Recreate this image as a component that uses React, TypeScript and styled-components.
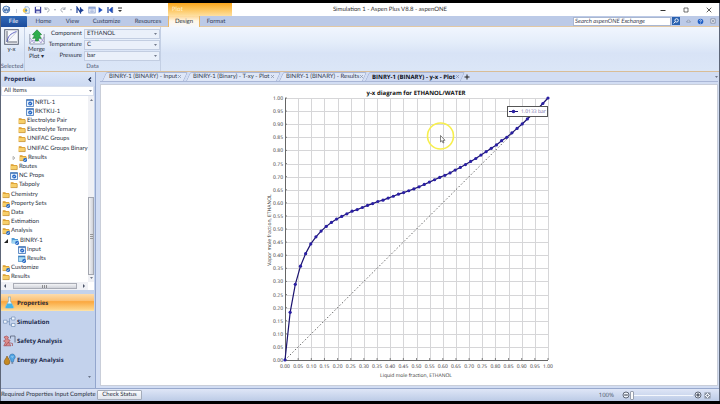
import React, { useState } from "react";
import styled, { createGlobalStyle, css } from "styled-components";

const GlobalStyle = createGlobalStyle`
  * { box-sizing: border-box; }
  body { margin: 0; background: #000; }
  body, button, input, select {
    font-family: "Open Sans", "Noto Sans", sans-serif;
    font-size: 6px;
    line-height: 8px;
    color: #2a3140;
    text-rendering: geometricPrecision;
  }
  button { padding: 0; margin: 0; border: 0; background: none; cursor: default; }
  svg { display: block; flex: none; }
`;

const Window = styled.div`
  position: relative;
  height: 100vh;
  display: flex;
  flex-direction: column;
  border: solid #000;
  border-width: 3px 0;
  background: #c3d2ec;
  overflow: hidden;
  &::after {
    content: "";
    position: absolute;
    inset: 0;
    border: solid #5d6678;
    border-width: 0 1px;
    pointer-events: none;
  }
`;

/* ---------- title bar ---------- */

const TitleBar = styled.header`
  flex: none;
  height: 13px;
  display: grid;
  grid-template-columns: 168px 64px 1fr 68px;
  align-items: center;
  background: #fff;
`;

const QuickAccess = styled.div`
  display: flex;
  align-items: center;
  gap: 4px;
  padding-left: 2px;
`;

const ContextHeading = styled.div`
  height: 13px;
  padding-left: 4px;
  line-height: 13px;
  color: #fff3d8;
  background: linear-gradient(#fba61c, #fdc04f 40%, #fee0a2);
`;

const Title = styled.h1`
  margin: 0;
  padding-right: 104px;
  font: 400 6px/8px Lato, sans-serif;
  text-align: center;
  color: #333;
`;

const WindowControls = styled.div`
  display: flex;
  button { flex: 1; display: grid; place-items: center; height: 12px; }
`;

/* ---------- ribbon ---------- */

const RibbonTabs = styled.nav`
  flex: none;
  height: 11px;
  display: flex;
  background: #bccae7;
  border-bottom: 1px solid #e2c8a4;
`;

const RibbonTab = styled.button<{ $w: number; $kind?: "file" | "active" }>`
  width: ${(p) => p.$w}px;
  height: 11px;
  line-height: 11px;
  font-family: Lato, sans-serif;
  color: #36435c;
  ${(p) =>
    p.$kind === "file" &&
    css`
      color: #fff;
      background: linear-gradient(#3069b8, #1c4b9b);
      border-radius: 0 1px 0 0;
    `}
  ${(p) =>
    p.$kind === "active" &&
    css`
      background: linear-gradient(#fdd795, #fff6e6 45%, #f4f7fd);
      border: solid #eab766;
      border-width: 0 1px;
      color: #28303f;
    `}
`;

const RibbonRight = styled.div`
  margin-left: auto;
  display: flex;
  align-items: center;
  padding-right: 2px;
`;

const SearchForm = styled.form`
  display: flex;
  align-items: center;
  gap: 1px;
  margin-right: 3px;
`;

const SearchBox = styled.input`
  width: 98px;
  height: 9px;
  padding: 0 1px;
  border: 1px solid #a9b7d2;
  background: #fff;
  font-style: italic;
  font-family: Lato, sans-serif;
  &::placeholder { color: #3c4352; opacity: 1; }
`;

const IconButton = styled.button<{ $w?: number }>`
  width: ${(p) => p.$w ?? 8}px;
  height: 8px;
  display: grid;
  place-items: center;
`;

const Ribbon = styled.section`
  flex: none;
  height: 45px;
  display: flex;
  background: linear-gradient(#f1f6fe, #e4edfa 35%, #d8e3f6 60%, #dbe6f7);
  border-bottom: 1px solid #d9bd97;
`;

const RibbonGroup = styled.div<{ $w: number }>`
  width: ${(p) => p.$w}px;
  padding: 2px 0 0;
  display: flex;
  flex-direction: column;
  justify-content: space-between;
  border-right: 1px solid #c3cfe4;
`;

const GroupBody = styled.div`
  display: flex;
`;

const GroupLabel = styled.div`
  text-align: center;
  font-family: Lato, sans-serif;
  color: #56627b;
  white-space: nowrap;
`;

const BigButton = styled.button<{ $w: number }>`
  width: ${(p) => p.$w}px;
  display: flex;
  flex-direction: column;
  align-items: center;
  gap: 1px;
  line-height: 7px;
  font-family: Lato, sans-serif;
`;

const Fields = styled.div`
  flex: 1;
  display: grid;
  grid-template-columns: 1fr 76px;
  gap: 1px 2px;
  align-items: center;
  label { text-align: right; font-family: Lato, sans-serif; }
`;

const SelectWrap = styled.div`
  position: relative;
  display: flex;
  svg { position: absolute; right: 3px; top: 4px; pointer-events: none; }
`;

const Select = styled.select`
  appearance: none;
  width: 100%;
  height: 10px;
  padding: 0 2px;
  border: 1px solid #c2cde1;
  border-radius: 0;
  background: #eaf0fa;
  font-family: Lato, sans-serif;
`;

/* ---------- body ---------- */

const Body = styled.main`
  flex: 1;
  min-height: 0;
  display: grid;
  grid-template-columns: 96px 1fr;
`;

const Sidebar = styled.aside`
  min-height: 0;
  display: flex;
  flex-direction: column;
  padding-left: 1px;
  border-right: 1px solid #93a6cd;
`;

const PanelHeader = styled.div`
  flex: none;
  height: 14px;
  display: flex;
  align-items: center;
  justify-content: space-between;
  padding: 0 3px;
  background: linear-gradient(#dce6f8, #ccd9f1);
  h2 { margin: 0; font: 700 6px/8px "Open Sans", sans-serif; color: #16264c; }
`;

const TreeFilter = styled.div`
  flex: none;
  position: relative;
  margin-right: 1px;
  select { display: block; background: #fff; border: 1px solid #d8dfed; }
  svg { position: absolute; right: 2px; top: 4px; pointer-events: none; }
`;

const TreeArea = styled.div`
  flex: 1;
  min-height: 0;
  display: grid;
  grid-template-columns: 1fr 6px;
  grid-template-rows: 1fr 8px;
  margin-right: 1px;
  background: #fff;
`;

const Tree = styled.ul`
  margin: 0;
  padding: 2px 0 0;
  min-height: 0;
  list-style: none;
  display: flex;
  flex-direction: column;
`;

const TreeRow = styled.li<{ $depth: number }>`
  flex: 1;
  min-height: 0;
  display: flex;
  align-items: center;
  gap: 1px;
  padding-left: ${(p) => 1 + p.$depth * 8}px;
  font-family: Lato, sans-serif;
  white-space: nowrap;
`;

const Twisty = styled.span`
  width: 8px;
  padding-left: 2px;
`;

const ScrollBar = styled.div<{ $dir: "v" | "h" }>`
  display: flex;
  flex-direction: ${(p) => (p.$dir === "v" ? "column" : "row")};
  align-items: center;
  justify-content: space-between;
  padding: ${(p) => (p.$dir === "v" ? "3px 0" : "0 3px")};
  background: #f0f1f5;
`;

const VSpace = styled.div`
  flex: 102;
`;

const VThumb = styled.div`
  flex: 80;
  width: 6px;
  margin-bottom: 2px;
  display: grid;
  place-items: center;
  border: 1px solid #a4a7b0;
  background: linear-gradient(90deg, #f3f4f6, #cfd1d8);
`;

const HThumb = styled.div`
  width: 64px;
  height: 6px;
  display: grid;
  place-items: center;
  border: 1px solid #a9acb5;
  background: linear-gradient(#f3f4f6, #cfd1d8);
`;

const NavPane = styled.nav`
  flex: none;
  display: flex;
  flex-direction: column;
  margin-top: 4px;
  padding-right: 1px;
  height: 94px;
`;

const NavButton = styled.button<{ $active?: boolean }>`
  height: 17px;
  margin-bottom: 2px;
  display: flex;
  align-items: center;
  gap: 1px;
  padding-left: 1px;
  font: 700 6px/8px "Open Sans", sans-serif;
  color: #1d2c4d;
  ${(p) =>
    p.$active &&
    css`
      background: linear-gradient(#fbdcae, #fcc277 38%, #fba83f 45%, #fdd387 90%, #fde5ae);
      color: #2d2a35;
    `}
`;

const NavMore = styled.button`
  align-self: flex-end;
  margin: auto 3px 10px 0;
`;

const Workspace = styled.section`
  min-width: 0;
  min-height: 0;
  display: flex;
  flex-direction: column;
  padding: 0 2px 2px 4px;
  background: #d2ddf3;
`;

const DocTabs = styled.div`
  flex: none;
  height: 10px;
  margin-bottom: 2px;
  display: flex;
  align-items: center;
  border-bottom: 1px solid #a9b6d6;
`;

const DocTab = styled.button<{ $active?: boolean; $w: number }>`
  position: relative;
  width: ${(p) => p.$w}px;
  height: 9px;
  display: flex;
  align-items: center;
  justify-content: space-between;
  padding: 0 2px 0 9px;
  white-space: nowrap;
  font-family: ${(p) => (p.$active ? '"Open Sans"' : "Lato")}, sans-serif;
  font-weight: ${(p) => (p.$active ? 700 : 400)};
  color: ${(p) => (p.$active ? "#0c1020" : "#323b4e")};
  & > * { position: relative; }
  &::before {
    content: "";
    position: absolute;
    inset: 0 -2px 0 4px;
    border: 1px solid #a9b6d6;
    border-width: 1px 1px 0;
    border-radius: 2px 2px 0 0;
    background: ${(p) => (p.$active ? "#cdd8f1" : "#dfe7f7")};
    transform: skewX(-25deg);
  }
`;

const DocMenu = styled.button`
  margin-left: auto;
`;

const PlotArea = styled.div`
  flex: 1;
  min-height: 0;
  display: flex;
  justify-content: center;
  border: 1px solid #c9ced9;
  background: #fff;
  svg { height: 100%; width: auto; }
`;

/* ---------- status bar ---------- */

const StatusBar = styled.footer`
  flex: none;
  height: 13px;
  display: flex;
  align-items: center;
  padding: 0 8px 0 1px;
  background: linear-gradient(#dfe6f7, #bccbe6);
  border-top: 1px solid #98a9cd;
`;

const StatusText = styled.span`
  width: 96px;
  font-family: Lato, sans-serif;
  white-space: nowrap;
`;

const StatusButton = styled.button`
  width: 45px;
  height: 10px;
  border: 1px solid #a5acba;
  border-radius: 1px;
  background: linear-gradient(#fafbfd, #dfe3ec);
  font-family: Lato, sans-serif;
`;

const Zoom = styled.div`
  margin-left: auto;
  display: flex;
  align-items: center;
  label { margin-right: 8px; color: #4a5366; }
`;

const ZoomSlider = styled.input`
  appearance: none;
  width: 63px;
  height: 10px;
  margin: 0 1px 0 0;
  background: linear-gradient(#f5f8fd, #f5f8fd) center / 100% 1px no-repeat;
  &::-webkit-slider-thumb {
    appearance: none;
    width: 4px;
    height: 9px;
    border: 1px solid #98a0af;
    border-radius: 1px;
    background: #fafafa;
  }
`;

/* ---------- icons ---------- */

const Caret = ({ size = 3, up = false }: { size?: number; up?: boolean }) => (
  <svg width={size} height="2" viewBox="0 0 4 2">
    <path d={up ? "M0 2L2 0L4 2Z" : "M0 0L2 2L4 0Z"} fill="#4b5468" />
  </svg>
);

const SideCaret = ({ left = false }: { left?: boolean }) => (
  <svg width="2" height="4" viewBox="0 0 2 4">
    <path d={left ? "M2 0L0 2L2 4Z" : "M0 0L2 2L0 4Z"} fill="#4b5468" />
  </svg>
);

const CloseGlyph = () => (
  <svg width="5" height="5" viewBox="0 0 5 5">
    <path d="M1 1L4 4M4 1L1 4" stroke="#8590a8" strokeWidth=".7" />
  </svg>
);

const Badge = () => (
  <>
    <circle cx="6.1" cy="5.9" r="2" fill="#2468c4" />
    <path d="M5 5.9L5.9 6.8L7.2 5" stroke="#fff" strokeWidth=".6" fill="none" />
  </>
);

type IconKind = "folder" | "folderOk" | "blueFolder" | "input" | "results";

const TreeIcon = ({ kind }: { kind: IconKind }) => (
  <svg width="8" height="8" viewBox="0 0 8 8">
    {(kind === "folder" || kind === "folderOk") && (
      <>
        <path d="M.7 1.3H3.2L4 2.1H7.2V6.6H.7Z" fill="#d99a2b" />
        <path d="M.7 2.8H7.2V6.6H.7Z" fill="#f7cf6a" />
        <path d="M.7 6.6H7.2V3" stroke="#b47a1c" strokeWidth=".5" fill="none" />
      </>
    )}
    {kind === "blueFolder" && (
      <>
        <path d="M.6 1H3.2L4 1.9H7V6.2H.6Z" fill="#4f9ad4" />
        <path d="M1.6 3H7.6L6.8 6.4H.8Z" fill="#9fd5f2" />
      </>
    )}
    {kind === "input" && (
      <>
        <rect x=".6" y=".6" width="6.8" height="6.8" fill="#e8f1fc" stroke="#3f74b8" strokeWidth=".8" />
        <path d="M.6 1.4H7.4" stroke="#3f74b8" strokeWidth=".9" />
        <circle cx="4.2" cy="4.4" r="2" fill="#1f63c4" />
        <path d="M3.2 4.4L4 5.2L5.3 3.6" stroke="#fff" strokeWidth=".6" fill="none" />
      </>
    )}
    {kind === "results" && (
      <>
        <rect x=".6" y="1" width="6.4" height="5.4" fill="#a9dbf4" stroke="#3f86c4" strokeWidth=".7" />
        <path d="M.6 1.7H7" stroke="#2f6fb4" strokeWidth="1" />
      </>
    )}
    {(kind === "folderOk" || kind === "results" || kind === "blueFolder") && <Badge />}
  </svg>
);

const AppIcon = () => (
  <svg width="9" height="9" viewBox="0 0 9 9">
    <circle cx="4.2" cy="4.5" r="3.4" fill="#d7e5f6" stroke="#3d6fae" strokeWidth=".9" />
    <path d="M1.5 3L3 6.5L4.3 3.5L5.6 6.5L7.6 2M2 5H8" stroke="#2b5ca0" strokeWidth=".7" fill="none" />
  </svg>
);
const NewIcon = () => (
  <svg width="8" height="8" viewBox="0 0 8 8">
    <path d="M3 .8H6L7.3 2V7.3H3Z" fill="#eef5fd" stroke="#5d8cc4" strokeWidth=".6" />
    <circle cx="3" cy="4.4" r="2.2" fill="#f6c945" />
    <circle cx="4.2" cy="4.4" r="1.1" fill="#3f86cf" />
  </svg>
);
const SaveIcon = () => (
  <svg width="8" height="8" viewBox="0 0 8 8">
    <path d="M.8 .8H7.2V7.2H.8Z" fill="#3a3f9c" />
    <path d="M2 .8H6V3.5H2Z" fill="#fff" />
    <path d="M2.2 4.8H5.8V7.2H2.2Z" fill="#c9cdea" />
  </svg>
);
const UndoIcon = ({ redo = false }: { redo?: boolean }) => (
  <svg width="6" height="7" viewBox="0 0 6 7">
    <path
      d={redo ? "M5 1V3.4H2.8M5 3.2C3.6 1 .8 2 1 4.2C1.1 5.4 2 6 3 6" : "M1 1V3.4H3.2M1 3.2C2.4 1 5.2 2 5 4.2C4.9 5.4 4 6 3 6"}
      stroke="#9298a5"
      strokeWidth=".8"
      fill="none"
    />
  </svg>
);
const NextIcon = () => (
  <svg width="8" height="8" viewBox="0 0 8 8">
    <path d="M1 7V1.2L4.5 6.6V1.2" stroke="#1c3f94" strokeWidth="1.2" fill="none" />
    <path d="M4.6 2L7.8 4.2L4.6 6.4Z" fill="#1c3f94" />
  </svg>
);
const PanelIcon = () => (
  <svg width="8" height="8" viewBox="0 0 8 8">
    <rect x=".8" y="1" width="6.4" height="6" fill="#e8eefa" stroke="#7c93c4" strokeWidth=".7" />
    <path d="M.8 2H7.2" stroke="#5c7cc0" />
    <path d="M2 4H6M2 5.5H6M4 3V7" stroke="#9fb0d6" strokeWidth=".6" />
  </svg>
);
const PlayIcon = () => (
  <svg width="5" height="8" viewBox="0 0 5 8">
    <path d="M.6 1L4.6 4L.6 7Z" fill="#1f4fc0" />
  </svg>
);
const ResetIcon = () => (
  <svg width="7" height="8" viewBox="0 0 7 8">
    <path d="M1 1V7" stroke="#1c3f94" strokeWidth="1.2" />
    <path d="M5 1L1.8 4L5 7Z" fill="#1f4fc0" />
    <path d="M5.6 1V7" stroke="#1c3f94" strokeWidth=".8" />
  </svg>
);

const YxIcon = () => (
  <svg width="15" height="16" viewBox="0 0 15 16">
    <rect x=".7" y=".7" width="13.6" height="14.6" fill="#f7f9fd" stroke="#596274" />
    <path d="M3 2V13H13" stroke="#3a4252" strokeWidth=".8" fill="none" />
    <path d="M3 13C4 7 6 5 12.5 2.5" stroke="#3b3fb4" strokeWidth=".8" fill="none" />
    <path d="M3 13L12.5 3" stroke="#8f98aa" strokeWidth=".5" />
  </svg>
);
const MergeIcon = () => (
  <svg width="16" height="16" viewBox="0 0 16 16">
    <path d="M.8 5V15H15.2V5" fill="#f2f6fb" stroke="#7e8a9e" strokeWidth=".8" />
    <path d="M1 14C4 9 6 13 8 11S12 9 15 13M1 9L5 14L8 9L12 14L15 8" stroke="#8b78c4" strokeWidth=".6" fill="none" />
    <path d="M8 .8L12.6 5.6L10.4 6.4L12.4 9.4L9.4 9V12H6.6V9L3.6 9.4L5.6 6.4L3.4 5.6Z" fill="#2fae4c" stroke="#1c7a34" strokeWidth=".6" />
  </svg>
);

const FlaskIcon = () => (
  <svg width="14" height="13" viewBox="0 0 14 13">
    <path d="M6 1H9M6.6 1V5L3.4 11C3.2 11.8 3.6 12.2 4.4 12.2H10.6C11.4 12.2 11.8 11.8 11.6 11L8.4 5V1" fill="#eef8fd" stroke="#7ca7c4" strokeWidth=".6" />
    <path d="M5.3 7.6H9.7L11.4 11C11.6 11.7 11.2 12 10.6 12H4.4C3.8 12 3.4 11.7 3.6 11Z" fill="#45b4e6" />
  </svg>
);
const FlowIcon = () => (
  <svg width="14" height="13" viewBox="0 0 14 13">
    <path d="M1.5 5.2H5V8.2H1.5ZM9.5 2H13V5H9.5ZM9.5 8.5H13V11.5H9.5Z" fill="#f2f7fd" stroke="#7290b8" strokeWidth=".7" />
    <path d="M5 6.7H7.5M9.5 3.5H7.5V10H9.5" stroke="#7290b8" strokeWidth=".7" fill="none" />
  </svg>
);
const SafetyIcon = () => (
  <svg width="14" height="13" viewBox="0 0 14 13">
    <path d="M8.5 4.5V2H13V8.5" stroke="#55607a" strokeWidth=".8" fill="none" />
    <path d="M2 3L4.5 2L6.5 3.2L5.5 5.2L8.1 6.4L6.5 8.4L9 11.8H1.8L3.5 8.4L1.5 7L3.9 5.4Z" fill="#dc8c8c" stroke="#9f3f46" strokeWidth=".6" />
    <path d="M3.5 12L6 8.4L10.5 9.5V12" stroke="#a34a4f" strokeWidth=".7" fill="none" />
  </svg>
);
const EnergyIcon = () => (
  <svg width="14" height="13" viewBox="0 0 14 13">
    <path d="M5 3C6 5.4 7.8 6.6 7.8 9A2.8 2.8 0 0 1 2.2 9C2.2 6.8 4.2 5.6 5 3Z" fill="#c68a22" stroke="#7a5114" strokeWidth=".6" />
    <path d="M10.3 1A3 3 0 0 1 12 6.4L11.4 8.8H9.2L8.6 6.4A3 3 0 0 1 10.3 1Z" fill="#52a6e4" stroke="#2d6ca8" strokeWidth=".6" />
    <path d="M9.4 10H11.2" stroke="#3b4960" strokeWidth=".9" />
    <path d="M9.6 3.4L10.3 4.4L11.2 3.2" stroke="#fff" strokeWidth=".5" fill="none" />
  </svg>
);

const Signed = ({ plus = false }: { plus?: boolean }) => (
  <svg width="8" height="8" viewBox="0 0 8 8">
    <circle cx="4" cy="4" r="3" fill="#f0f4fb" stroke="#3f4858" strokeWidth=".8" />
    <path d={plus ? "M2.2 4H5.8M4 2.2V5.8" : "M2.2 4H5.8"} stroke="#2b3342" />
  </svg>
);

/* ---------- chart ---------- */

const VAPOR = [
  0, 0.182, 0.289, 0.358, 0.406, 0.443, 0.47, 0.492, 0.51, 0.525, 0.538, 0.548, 0.558,
  0.568, 0.574, 0.582, 0.59, 0.597, 0.605, 0.61, 0.618, 0.625, 0.633, 0.639, 0.646, 0.653,
  0.661, 0.67, 0.679, 0.688, 0.697, 0.705, 0.714, 0.725, 0.735, 0.746, 0.758, 0.769, 0.782,
  0.795, 0.808, 0.821, 0.837, 0.85, 0.867, 0.884, 0.901, 0.92, 0.938, 0.958, 0.979, 1,
];
const PLOT = { left: 26, top: 13, width: 263, height: 262 };
const px = (v: number) => PLOT.left + v * PLOT.width;
const py = (v: number) => PLOT.top + (1 - v) * PLOT.height;
const TICKS = Array.from({ length: 21 }, (_, i) => i / 20);
const POINTS = VAPOR.map((v, i) => ({ x: px(i / (VAPOR.length - 1)), y: py(v) }));

const ChartText = styled.text<{ $size?: number; $bold?: boolean; $color?: string }>`
  font-family: "Open Sans", sans-serif;
  font-size: ${(p) => p.$size ?? 5}px;
  font-weight: ${(p) => (p.$bold ? 700 : 400)};
  fill: ${(p) => p.$color ?? "#333"};
`;

const Chart = () => (
  <svg viewBox="0 0 300 300" role="img" aria-label="y-x diagram">
    <ChartText $bold $size={6} $color="#111" x={157} y={10} textAnchor="middle">y-x diagram for ETHANOL/WATER</ChartText>
    {TICKS.map((t) => (
      <g key={t}>
        <path
          d={`M${Math.round(px(t)) + 0.5} ${PLOT.top}V${py(0)}M${PLOT.left} ${Math.round(py(t)) + 0.5}H${px(1)}`}
          stroke="#d6d6d8"
          fill="none"
        />
        <path d={`M${px(t)} ${py(0)}v-2M${PLOT.left} ${py(t)}h2`} stroke="#555" strokeWidth=".7" />
        <ChartText x={24} y={py(t) + 2} textAnchor="end">{t.toFixed(2)}</ChartText>
        <ChartText x={px(t)} y={283} textAnchor="middle">{t.toFixed(2)}</ChartText>
      </g>
    ))}
    <path d={`M26.5 ${PLOT.top}V275.5H289`} stroke="#666" fill="none" />
    <path d={`M${px(0)} ${py(0)}L${px(1)} ${py(1)}`} stroke="#444" strokeWidth=".8" strokeDasharray="1.5 2" />
    <polyline points={POINTS.map((p) => `${p.x},${p.y}`).join(" ")} stroke="#1c1470" strokeWidth="1.2" fill="none" />
    {POINTS.map((p) => (
      <circle key={p.x} cx={p.x} cy={p.y} r="1.6" fill="#2a1fa4" />
    ))}
    <ChartText x={157} y={292} textAnchor="middle">Liquid mole fraction, ETHANOL</ChartText>
    <ChartText transform="translate(12 145) rotate(-90)" textAnchor="middle">Vapor mole fraction, ETHANOL</ChartText>
    <rect x="248.5" y="21.5" width="40" height="10" fill="#fff" stroke="#555" />
    <path d="M250 26.5H259" stroke="#1c1470" />
    <circle cx="254.5" cy="26.5" r="1.8" fill="#2a1fa4" />
    <ChartText $color="#6f6aa8" x={262} y={28}>1.0133 bar</ChartText>
    <circle cx="181.5" cy="51" r="13" fill="none" stroke="#f7ef4e" strokeWidth="1.6" />
    <path d="M181.5 50.5V57L183 55.6L184 58L185 57.5L184 55.3H186Z" fill="#fff" stroke="#333" strokeWidth=".6" />
  </svg>
);

/* ---------- data ---------- */

const TREE: { label: string; depth: number; icon: IconKind; twisty?: "open" | "closed" }[] = [
  { label: "NRTL-1", depth: 3, icon: "input" },
  { label: "RKTKIJ-1", depth: 3, icon: "input" },
  { label: "Electrolyte Pair", depth: 2, icon: "folder" },
  { label: "Electrolyte Ternary", depth: 2, icon: "folder" },
  { label: "UNIFAC Groups", depth: 2, icon: "folder" },
  { label: "UNIFAC Groups Binary", depth: 2, icon: "folder" },
  { label: "Results", depth: 1, icon: "folderOk", twisty: "closed" },
  { label: "Routes", depth: 1, icon: "folder" },
  { label: "NC Props", depth: 1, icon: "input" },
  { label: "Tabpoly", depth: 1, icon: "folder" },
  { label: "Chemistry", depth: 0, icon: "folder" },
  { label: "Property Sets", depth: 0, icon: "folderOk" },
  { label: "Data", depth: 0, icon: "folder" },
  { label: "Estimation", depth: 0, icon: "folder" },
  { label: "Analysis", depth: 0, icon: "folderOk" },
  { label: "BINRY-1", depth: 0, icon: "blueFolder", twisty: "open" },
  { label: "Input", depth: 2, icon: "input" },
  { label: "Results", depth: 2, icon: "results" },
  { label: "Customize", depth: 0, icon: "folderOk" },
  { label: "Results", depth: 0, icon: "folder" },
];

const FIELDS = [
  { id: "component", label: "Component", value: "ETHANOL" },
  { id: "temperature", label: "Temperature", value: "C" },
  { id: "pressure", label: "Pressure", value: "bar" },
];

const TABS: { label: string; w: number; kind?: "file" | "active" }[] = [
  { label: "File", w: 27, kind: "file" },
  { label: "Home", w: 33 },
  { label: "View", w: 25 },
  { label: "Customize", w: 43 },
  { label: "Resources", w: 40 },
  { label: "Design", w: 32, kind: "active" },
  { label: "Format", w: 32 },
];

const DOCS = [
  { label: "BINRY-1 (BINARY) - Input", w: 84 },
  { label: "BINRY-1 (Binary) - T-xy - Plot", w: 93 },
  { label: "BINRY-1 (BINARY) - Results", w: 86 },
  { label: "BINRY-1 (BINARY) - y-x - Plot", w: 98, active: true },
];

const NAV = [
  { label: "Properties", icon: <FlaskIcon />, active: true },
  { label: "Simulation", icon: <FlowIcon /> },
  { label: "Safety Analysis", icon: <SafetyIcon /> },
  { label: "Energy Analysis", icon: <EnergyIcon /> },
];

export default function App() {
  const [zoom, setZoom] = useState(0);
  return (
    <>
      <GlobalStyle />
      <Window>
        <TitleBar>
          <QuickAccess>
            <AppIcon />
            <svg width="3" height="8" viewBox="0 0 3 8"><path d="M1.5 3V7" stroke="#a9b2c4" strokeWidth=".7" /></svg>
            <IconButton aria-label="New"><NewIcon /></IconButton>
            <IconButton aria-label="Save" $w={6}><SaveIcon /></IconButton>
            <IconButton aria-label="Undo" $w={6}><UndoIcon /></IconButton>
            <Caret size={2} />
            <IconButton aria-label="Redo" $w={6}><UndoIcon redo /></IconButton>
            <Caret size={2} />
            <IconButton aria-label="Next"><NextIcon /></IconButton>
            <IconButton aria-label="Control panel" $w={6}><PanelIcon /></IconButton>
            <IconButton aria-label="Run" $w={5}><PlayIcon /></IconButton>
            <IconButton aria-label="Reset" $w={7}><ResetIcon /></IconButton>
            <svg width="4" height="6" viewBox="0 0 4 6"><path d="M0 1H4" stroke="#333" /><path d="M0 3H4L2 5Z" fill="#333" /></svg>
          </QuickAccess>
          <ContextHeading>Plot</ContextHeading>
          <Title>Simulation 1 - Aspen Plus V8.8 - aspenONE</Title>
          <WindowControls>
            <button aria-label="Minimize"><svg width="6" height="6" viewBox="0 0 6 6"><path d="M.5 3.5H5.5" stroke="#333" /></svg></button>
            <button aria-label="Maximize"><svg width="6" height="6" viewBox="0 0 6 6"><path d="M1 1H5V5H1Z" stroke="#333" strokeWidth=".7" fill="none" /></svg></button>
            <button aria-label="Close"><svg width="6" height="6" viewBox="0 0 6 6"><path d="M.7 .7L5.3 5.3M5.3 .7L.7 5.3" stroke="#333" strokeWidth=".8" /></svg></button>
          </WindowControls>
        </TitleBar>

        <RibbonTabs>
          {TABS.map((t) => (
            <RibbonTab key={t.label} $w={t.w} $kind={t.kind}>{t.label}</RibbonTab>
          ))}
          <RibbonRight>
            <SearchForm>
              <SearchBox aria-label="Search aspenONE Exchange" placeholder="Search aspenONE Exchange" />
              <IconButton type="button" aria-label="Search">
                <svg width="8" height="8" viewBox="0 0 8 8">
                  <rect width="8" height="8" fill="#2a62b0" />
                  <circle cx="4.6" cy="3.4" r="1.7" stroke="#fff" strokeWidth=".9" fill="none" />
                  <path d="M3.4 4.7L1.6 6.5" stroke="#fff" />
                </svg>
              </IconButton>
            </SearchForm>
            <IconButton aria-label="Collapse ribbon" $w={11}>
              <svg width="5" height="4" viewBox="0 0 5 4"><path d="M.5 3L2.5 .8L4.5 3Z" stroke="#66728c" strokeWidth=".6" fill="#e8eefa" /></svg>
            </IconButton>
            <IconButton aria-label="Help" $w={13}>
              <svg width="7" height="7" viewBox="0 0 7 7">
                <circle cx="3.5" cy="3.5" r="2.8" fill="#1f5fc6" />
                <path d="M2.5 2.6C2.6 1.5 4.5 1.5 4.4 2.7C4.3 3.4 3.5 3.3 3.5 4.2M3.5 4.8V5.5" stroke="#fff" strokeWidth=".7" fill="none" />
              </svg>
            </IconButton>
            <IconButton aria-label="Close documents" $w={11}>
              <svg width="6" height="6" viewBox="0 0 6 6"><path d="M.8 .8H5.2V5.2H.8ZM1.8 1.8L4.2 4.2M4.2 1.8L1.8 4.2" stroke="#6c7589" strokeWidth=".6" fill="#e9eef8" /></svg>
            </IconButton>
          </RibbonRight>
        </RibbonTabs>

        <Ribbon>
          <RibbonGroup $w={25}>
            <GroupBody><BigButton $w={23}><YxIcon />y-x</BigButton></GroupBody>
            <GroupLabel>Selected</GroupLabel>
          </RibbonGroup>
          <RibbonGroup $w={136}>
            <GroupBody>
              <BigButton $w={23}>
                <MergeIcon />
                <span>Merge<br />Plot ▾</span>
              </BigButton>
              <Fields>
                {FIELDS.map((f) => (
                  <React.Fragment key={f.id}>
                    <label htmlFor={f.id}>{f.label}</label>
                    <SelectWrap>
                      <Select id={f.id}><option>{f.value}</option></Select>
                      <Caret />
                    </SelectWrap>
                  </React.Fragment>
                ))}
              </Fields>
            </GroupBody>
            <GroupLabel>Data</GroupLabel>
          </RibbonGroup>
        </Ribbon>

        <Body>
          <Sidebar>
            <PanelHeader>
              <h2>Properties</h2>
              <button aria-label="Collapse panel">
                <svg width="4" height="5" viewBox="0 0 4 5"><path d="M3 .5L1 2.5L3 4.5" stroke="#16264c" strokeWidth="1.2" fill="none" /></svg>
              </button>
            </PanelHeader>
            <TreeFilter>
              <Select aria-label="Filter items"><option>All Items</option></Select>
              <Caret />
            </TreeFilter>
            <TreeArea>
              <Tree>
                {TREE.map((row, i) => (
                  <TreeRow key={i} $depth={row.depth}>
                    {row.twisty && (
                      <Twisty>
                        <svg width="4" height="4" viewBox="0 0 4 4">
                          {row.twisty === "open" ? <path d="M4 0V4H0Z" fill="#222" /> : <path d="M1 .4L3 2L1 3.6Z" fill="#fff" stroke="#777" strokeWidth=".5" />}
                        </svg>
                      </Twisty>
                    )}
                    <TreeIcon kind={row.icon} />
                    {row.label}
                  </TreeRow>
                ))}
              </Tree>
              <ScrollBar $dir="v">
                <Caret up />
                <VSpace />
                <VThumb><svg width="3" height="5" viewBox="0 0 3 5"><path d="M0 .5H3M0 2.5H3M0 4.5H3" stroke="#666" strokeWidth=".6" /></svg></VThumb>
                <Caret />
              </ScrollBar>
              <ScrollBar $dir="h">
                <SideCaret left />
                <HThumb><svg width="5" height="3" viewBox="0 0 5 3"><path d="M.5 0V3M2.5 0V3M4.5 0V3" stroke="#555" strokeWidth=".6" /></svg></HThumb>
                <SideCaret />
              </ScrollBar>
            </TreeArea>
            <NavPane>
              {NAV.map((n) => (
                <NavButton key={n.label} $active={n.active}>{n.icon}{n.label}</NavButton>
              ))}
              <NavMore aria-label="Configure buttons"><Caret /></NavMore>
            </NavPane>
          </Sidebar>

          <Workspace>
            <DocTabs>
              {DOCS.map((d) => (
                <DocTab key={d.label} $w={d.w} $active={d.active}>
                  <span>{d.label}</span>
                  <CloseGlyph />
                </DocTab>
              ))}
              <IconButton aria-label="New tab" $w={12}>
                <svg width="6" height="6" viewBox="0 0 6 6"><path d="M.5 3H5.5M3 .5V5.5" stroke="#222" /></svg>
              </IconButton>
              <DocMenu aria-label="Open documents"><Caret /></DocMenu>
            </DocTabs>
            <PlotArea><Chart /></PlotArea>
          </Workspace>
        </Body>

        <StatusBar>
          <StatusText>Required Properties Input Complete</StatusText>
          <StatusButton>Check Status</StatusButton>
          <Zoom>
            <label htmlFor="zoom">100%</label>
            <IconButton aria-label="Zoom out"><Signed /></IconButton>
            <ZoomSlider id="zoom" type="range" min={0} max={100} value={zoom} onChange={(e) => setZoom(Number(e.target.value))} />
            <IconButton aria-label="Zoom in"><Signed plus /></IconButton>
            <IconButton aria-label="Fit to window" $w={10}>
              <svg width="7" height="7" viewBox="0 0 7 7">
                <rect x=".5" y=".5" width="6" height="6" rx=".8" fill="#f4f7fc" stroke="#7e899e" strokeWidth=".6" />
                <path d="M1.5 3V1.5H3M4 1.5H5.5V3M5.5 4V5.5H4M3 5.5H1.5V4M3 3H4V4H3Z" stroke="#38445c" strokeWidth=".6" fill="none" />
              </svg>
            </IconButton>
          </Zoom>
        </StatusBar>
      </Window>
    </>
  );
}
